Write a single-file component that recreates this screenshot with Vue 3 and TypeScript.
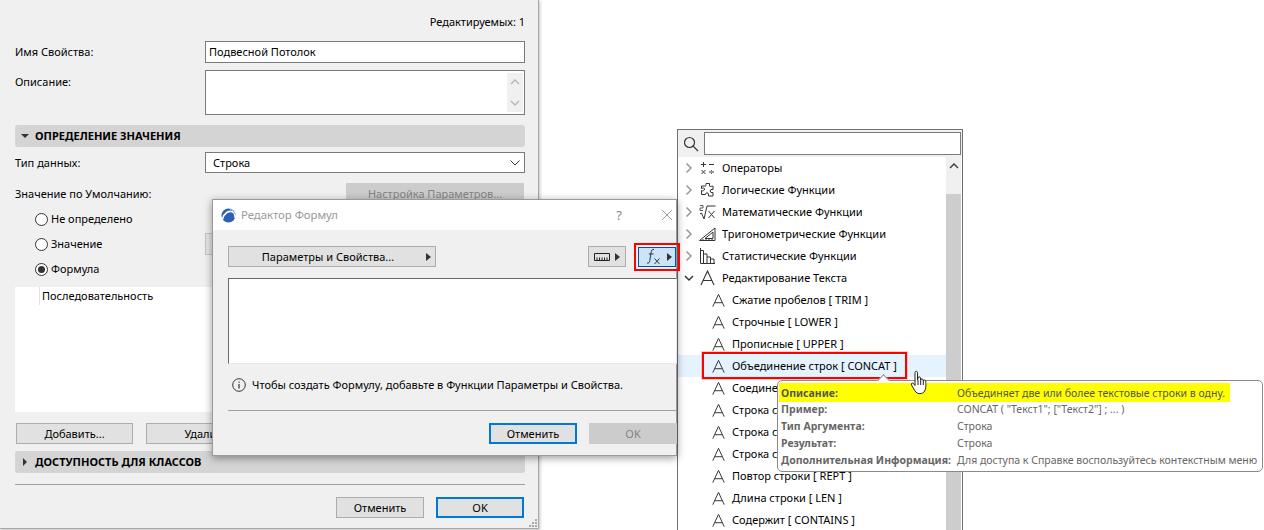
<script setup lang="ts">
interface Cat { label: string; icon: string; open?: boolean }
const cats: Cat[] = [
  { label: 'Операторы', icon: 'ops' },
  { label: 'Логические Функции', icon: 'puzzle' },
  { label: 'Математические Функции', icon: 'sqrt' },
  { label: 'Тригонометрические Функции', icon: 'tri' },
  { label: 'Статистические Функции', icon: 'bars' },
  { label: 'Редактирование Текста', icon: 'a', open: true },
]
const subs = [
  'Сжатие пробелов [ TRIM ]', 'Строчные [ LOWER ]', 'Прописные [ UPPER ]',
  'Объединение строк [ CONCAT ]', 'Соедине', 'Строка с', 'Строка с ',
  'Строка с  ', 'Повтор строки [ REPT ]', 'Длина строки [ LEN ]', 'Содержит [ CONTAINS ]',
]
const tips = [
  ['Описание:', 'Объединяет две или более текстовые строки в одну.'],
  ['Пример:', 'CONCAT ( "Текст1"; ["Текст2"] ; ... )'],
  ['Тип Аргумента:', 'Строка'],
  ['Результат:', 'Строка'],
  ['Дополнительная Информация:', 'Для доступа к Справке воспользуйтесь контекстным меню'],
]
</script>

<template>
  <div class="desk">
    <!-- property panel -->
    <section class="panel">
      <div class="editable">Редактируемых: 1</div>
      <div class="row r-name">
        <label>Имя Свойства:</label>
        <div class="input name">Подвесной Потолок</div>
      </div>
      <div class="row r-desc">
        <label class="top">Описание:</label>
        <div class="input area">
          <div class="mini-scroll">
            <svg width="10" height="6" viewBox="0 0 10 6"><path d="M1 5l4-4 4 4" class="chev-light" /></svg>
            <svg width="10" height="6" viewBox="0 0 10 6"><path d="M1 1l4 4 4-4" class="chev-light" /></svg>
          </div>
        </div>
      </div>
      <div class="section s1"><i class="tri-down"></i>ОПРЕДЕЛЕНИЕ ЗНАЧЕНИЯ</div>
      <div class="row r-type">
        <label>Тип данных:</label>
        <div class="input select">
          <span>Строка</span>
          <svg width="10" height="6" viewBox="0 0 10 6"><path d="M.5.500l4.500 4.500 4.500-4.500" fill="none" stroke="#333" /></svg>
        </div>
      </div>
      <div class="row r-def">
        <label>Значение по Умолчанию:</label>
        <div class="btn disabled params">Настройка Параметров...</div>
      </div>
      <div class="radios">
        <div class="radio"><i class="dot"></i>Не определено</div>
        <div class="radio"><i class="dot"></i>Значение<div class="valbox"></div></div>
        <div class="radio"><i class="dot on"></i>Формула</div>
      </div>
      <div class="list"><div class="cell">Последовательность</div></div>
      <div class="actions">
        <div class="btn add">Добавить...</div>
        <div class="btn del">Удалить</div>
      </div>
      <div class="section s2"><i class="tri-right"></i>ДОСТУПНОСТЬ ДЛЯ КЛАССОВ</div>
      <div class="rule"></div>
      <div class="foot">
        <div class="btn fbtn">Отменить</div>
        <div class="btn fbtn primary">OK</div>
      </div>
      <svg class="grip" width="10" height="10" viewBox="0 0 10 10" fill="#aaa">
        <rect x="7" y="1" width="2" height="2" /><rect x="4" y="4" width="2" height="2" /><rect x="7" y="4" width="2" height="2" />
        <rect x="1" y="7" width="2" height="2" /><rect x="4" y="7" width="2" height="2" /><rect x="7" y="7" width="2" height="2" />
      </svg>
    </section>

    <!-- function popup -->
    <section class="popup">
      <div class="search">
        <svg width="16" height="16" viewBox="0 0 16 16"><circle cx="6.500" cy="6.500" r="5" fill="none" stroke="#333" stroke-width="1.200" /><path d="M10.200 10.200L15 15" stroke="#333" stroke-width="1.200" /></svg>
        <div class="sinput"></div>
      </div>
      <div class="tree">
        <div class="items">
          <div v-for="c in cats" :key="c.label" class="item">
            <svg class="chev" width="10" height="12" viewBox="0 0 10 12">
              <path v-if="c.open" d="M1 4l4 4 4-4" fill="none" stroke="#333" stroke-width="1.500" />
              <path v-else d="M2.500 1.500l4.500 4.500-4.500 4.500" fill="none" stroke="#999" stroke-width="1.500" />
            </svg>
            <svg class="ic" width="17" height="16" viewBox="0 0 17 16" fill="none" stroke="#333">
              <template v-if="c.icon === 'ops'">
                <path d="M2 4.500h5M4.500 2v5M10 4.500h5M2.500 10l4 4M6.500 10l-4 4M10 12h5" />
                <path d="M12.500 10v.8M12.500 13.200v.8" />
              </template>
              <path v-else-if="c.icon === 'puzzle'" d="M7 1.500h3.500v2.500c0 1 3.500 0 3.500 0v3.500h-2c-1 0-1 3 0 3h2v3.500H9.500v-2c0-1.500-3-1.500-3 0v.5H2.500v-4c1.500 1 3 0 3-1.500S4 6 2.500 6.500V4H6.500c1 0 0-2.500.5-2.500z" />
              <template v-else-if="c.icon === 'sqrt'">
                <path d="M1 10l1.500-1L5 15 8 2h8.500M9.500 7l6 7M15.500 7l-6 7" />
                <path d="M1 1.500h3v2.500H1v2.500h3" stroke-width=".8" />
              </template>
              <template v-else-if="c.icon === 'tri'">
                <path d="M.5 14.500L16 2v12.500zM6 12.500l8-6.500v6.500z" />
                <path d="M4 14.500v-1.500M7 14.500v-1.500M10 14.500v-1.500M13 14.500v-1.500" />
              </template>
              <path v-else-if="c.icon === 'bars'" d="M1.500 0v15.500H16M1.500 14V2.500h3V15M4.500 6h3.500v9M8 9h3.500v6M11.500 11H15v4" />
              <path v-else d="M2 15L8.500 1 15 15M4.300 10.500h8.400" stroke-width="1.100" />
            </svg>
            <span>{{ c.label }}</span>
          </div>
          <div v-for="s in subs" :key="s" class="item sub" :class="{ hot: s.includes('CONCAT') }">
            <svg class="ic" width="15" height="15" viewBox="0 0 17 16" fill="none" stroke="#333">
              <path d="M2 15L8.500 1 15 15M4.300 10.500h8.400" stroke-width="1.100" />
            </svg>
            <span>{{ s }}</span>
          </div>
        </div>
        <div class="sbar">
          <div class="sup"><svg width="10" height="6" viewBox="0 0 10 6"><path d="M1 5l4-4 4 4" fill="none" stroke="#444" stroke-width="1.500" /></svg></div>
          <div class="sthumb"></div>
        </div>
      </div>
    </section>

    <!-- formula dialog -->
    <section class="dialog">
      <header class="titlebar">
        <svg class="logo" width="15" height="15" viewBox="0 0 15 15">
          <circle cx="7.500" cy="7.500" r="7" fill="#2f5fb5" />
          <path d="M1.500 11C3 5 8 2 12 4c1.500 1 2 3 2.200 6" fill="none" stroke="#fff" stroke-width="1.600" />
          <path d="M9 1.200A7 7 0 0 1 14 6" fill="none" stroke="#8fb2e6" stroke-width="1" />
        </svg>
        <span class="dtitle">Редактор Формул</span>
        <span class="help">?</span>
        <svg class="close" width="12" height="12" viewBox="0 0 12 12"><path d="M1 1l10 10M11 1L1 11" stroke="#9a9a9a" fill="none" /></svg>
      </header>
      <div class="dbody">
        <div class="tools">
          <div class="btn pp"><span>Параметры и Свойства...</span><i class="tri-right dark"></i></div>
          <div class="btn ruler">
            <svg width="16" height="8" viewBox="0 0 16 8"><path d="M.5.500h15v7H.500zM3 4.500v3M5.500 4.500v3M8 4.500v3M10.500 4.500v3M13 4.500v3" fill="none" stroke="#222" /></svg>
            <i class="tri-right dark"></i>
          </div>
          <div class="fxwrap">
            <div class="fx">
              <svg width="15" height="17" viewBox="0 0 15 17"><path d="M8 1.500C6 1 5.400 2.500 5 5L3.800 12.500c-.3 2-1 3-2.800 2.500M2.800 6h4.700M8.500 10.500l5 5.500M13.500 10.500l-5 5.500" fill="none" stroke="#333" /></svg>
              <i class="tri-right dark"></i>
            </div>
          </div>
        </div>
        <div class="editor"></div>
        <div class="info">
          <svg width="14" height="14" viewBox="0 0 14 14"><circle cx="7" cy="7" r="6.300" fill="none" stroke="#333" /><path d="M7 6v4.500M7 3.500v1.300" stroke="#333" stroke-width="1.200" /></svg>
          <span>Чтобы создать Формулу, добавьте в Функции Параметры и Свойства.</span>
        </div>
        <div class="drule"></div>
        <div class="dfoot">
          <div class="btn dbtn primary">Отменить</div>
          <div class="btn dbtn disabled">OK</div>
        </div>
      </div>
    </section>

    <div class="mark concat"></div>

    <!-- tooltip -->
    <aside class="tip">
      <i class="notch"></i>
      <div class="tipgrid">
        <template v-for="(t, i) in tips" :key="t[0]">
          <div class="tl" :class="{ y: i === 0 }">{{ t[0] }}</div>
          <div class="tv" :class="{ y: i === 0 }">{{ t[1] }}</div>
        </template>
      </div>
    </aside>

    <svg class="hand" width="20" height="26" viewBox="0 0 20 26">
      <path d="M5 2.500c0-1.500 2.500-1.500 2.500 0V10l.5-2c0-1.500 2.500-1.500 2.500 0l.2 2c0-1.500 2.300-1.500 2.400 0l.2 1c.2-1.300 2.200-1.300 2.400.2.400 3 .3 6-.5 8.500-.5 2-1.800 3.300-4 3.800-3 .5-5-.5-6.500-3L1.500 15c-.8-1.500 1-2.700 2-1.500L5 15.500z" fill="#fff" stroke="#222" />
      <path d="M8 10v5M10.700 10v5M13.300 11v4" stroke="#222" fill="none" />
    </svg>
  </div>
</template>

<style>
html, body { margin: 0; background: #fff; }
</style>

<style scoped>
.desk {
  position: relative;
  width: 1264px;
  height: 530px;
  overflow: hidden;
  background: #fff;
  color: #000;
  font: 11px/16px "Noto Sans", "Open Sans", sans-serif;
}
.panel {
  position: absolute;
  left: 0;
  top: 0;
  width: 539px;
  height: 529px;
  box-sizing: border-box;
  padding: 14px 13px 0 15px;
  background: #f0f0f0;
  border-right: 1px solid #a8a8a8;
  border-bottom: 1px solid #a8a8a8;
  box-shadow: 1px 1px 3px rgba(0, 0, 0, .25);
}
.editable { text-align: right; height: 16px; }
.row { display: flex; align-items: center; justify-content: space-between; }
.row label { display: block; }
.row label.top { align-self: flex-start; margin-top: 4px; }
.input {
  box-sizing: border-box;
  width: 320px;
  background: #fff;
  border: 1px solid #7a7a7a;
}
.r-name { margin-top: 11px; }
.name { height: 22px; padding: 2px 3px; line-height: 16px; }
.r-desc { margin-top: 7px; }
.area { height: 45px; position: relative; display: flex; justify-content: flex-end; padding: 2px 1px; }
.mini-scroll {
  width: 16px;
  background: #f0f0f0;
  display: flex;
  flex-direction: column;
  align-items: center;
  justify-content: space-between;
  padding: 6px 0;
  box-sizing: border-box;
}
.chev-light { fill: none; stroke: #b5b5b5; stroke-width: 1.300; }
.section {
  display: flex;
  align-items: center;
  height: 22px;
  background: #d4d4d4;
  border-radius: 3px;
  font-weight: 700;
}
.s1 { margin-top: 10px; }
.tri-down {
  width: 0; height: 0; margin: 0 6px 0 6px;
  border-left: 4px solid transparent; border-right: 4px solid transparent;
  border-top: 4px solid #333;
}
.tri-right {
  width: 0; height: 0; margin: 0 8px 0 8px;
  border-top: 4px solid transparent; border-bottom: 4px solid transparent;
  border-left: 4px solid #333;
}
.tri-right.dark { margin: 0; border-top-width: 4px; border-bottom-width: 4px; border-left-width: 5px; border-left-color: #333; }
.r-type { margin-top: 5px; }
.select {
  height: 21px;
  display: flex; align-items: center; justify-content: space-between;
  padding: 0 4px 0 7px;
}
.r-def { margin-top: 10px; height: 21px; }
.btn {
  box-sizing: border-box;
  display: flex; align-items: center; justify-content: center;
  background: #e1e1e1;
  border: 1px solid #adadad;
  flex: none;
}
.btn.disabled { background: #ccc; color: #838383; border-color: #ccc; }
.params { width: 178px; height: 21px; margin-right: 1px; }
.radios { margin: 7px 0 0 20px; display: flex; flex-direction: column; gap: 9px; }
.radio { display: flex; align-items: center; height: 16px; gap: 3px; }
.valbox {
  box-sizing: border-box;
  flex: none;
  width: 120px;
  height: 22px;
  margin-left: 100px;
  background: #e6e6e6;
  border: 1px solid #c4c4c4;
}
.dot {
  box-sizing: border-box;
  width: 13px; height: 13px;
  border: 1px solid #333;
  border-radius: 50%;
  background: #fff;
  position: relative;
}
.dot.on::after {
  content: "";
  position: absolute;
  inset: 2px;
  border-radius: 50%;
  background: #333;
}
.list { margin-top: 10px; height: 125px; background: #fff; padding-left: 24px; }
.cell { height: 18px; border-left: 1px solid #e2e2e2; padding-left: 2px; line-height: 18px; }
.actions { display: flex; gap: 13px; margin: 11px 0 0 1px; }
.add, .del { height: 21px; width: 117px; }
.del { width: 120px; }
.s2 { margin-top: 7px; }
.rule { height: 1px; margin-top: 11px; background: #a0a0a0; }
.foot { display: flex; justify-content: flex-end; gap: 12px; margin: 12px 1px 0 0; }
.fbtn { width: 88px; height: 21px; }
.primary { border: 2px solid #0078d7; }
.grip { position: absolute; right: 0; bottom: 0; }

.dialog {
  position: absolute;
  left: 212px;
  top: 199px;
  width: 465px;
  height: 257px;
  background: #f0f0f0;
  border: 1px solid #9a9a9a;
  box-sizing: border-box;
  box-shadow: 0 2px 8px rgba(0, 0, 0, .4);
}
.titlebar {
  height: 30px;
  background: #fff;
  display: flex;
  align-items: center;
  padding: 0 2px 0 8px;
}
.logo { margin-right: 5px; }
.dtitle { color: #999; font-size: 11.300px; }
.help { margin-left: auto; margin-right: 39px; color: #888; font-size: 13px; }
.close { margin-right: 1px; }
.dbody { padding: 16px 0 0 15px; }
.tools { display: flex; align-items: center; height: 21px; }
.pp { width: 208px; height: 21px; position: relative; padding-right: 8px; }
.pp .tri-right { position: absolute; right: 4px; top: 5.500px; }
.ruler { width: 38px; height: 21px; margin-left: 152px; gap: 5px; }
.fxwrap {
  margin-left: 8px;
  box-sizing: border-box;
  width: 46px;
  height: 28px;
  border: 2px solid #f00;
  padding: 2px;
  flex: none;
}
.fx {
  box-sizing: border-box;
  height: 100%;
  background: #cce4f7;
  border: 1px solid #005499;
  display: flex; align-items: center; justify-content: flex-end;
  gap: 6px;
  padding-right: 3px;
}
.editor {
  box-sizing: border-box;
  width: 449px;
  height: 86px;
  margin-top: 11px;
  background: #fff;
  border: 1px solid #e8e8e8;
  border-top: 1px solid #696969;
  border-left: 1px solid #696969;
}
.info { display: flex; align-items: center; gap: 6px; margin: 13px 0 0 4px; height: 16px; }
.drule { width: 449px; height: 1px; margin-top: 17px; background: #a0a0a0; }
.dfoot { display: flex; justify-content: flex-end; gap: 12px; width: 449px; margin-top: 12px; }
.dbtn { width: 88px; height: 21px; }

.popup {
  position: absolute;
  left: 677px;
  top: 129px;
  width: 286px;
  height: 420px;
  box-sizing: border-box;
  border: 1px solid #6f6f6f;
  background: #fff;
}
.search {
  height: 27px;
  background: #f0f0f0;
  display: flex;
  align-items: center;
  padding: 0 1px 0 5px;
  gap: 5px;
}
.sinput { flex: 1; height: 23px; box-sizing: border-box; background: #fff; border: 1px solid #7a7a7a; }
.tree { display: flex; height: 392px; }
.items { flex: 1; min-width: 0; }
.item { height: 22px; display: flex; align-items: center; color: #000; }
.chev { margin: 0 5px 0 6px; flex: none; }
.ic { margin-right: 6px; flex: none; }
.sub { padding-left: 33px; }
.sub .ic { margin-right: 6px; }
.hot { background: #e5f3ff; }
.sbar { width: 15px; margin-right: 1px; background: #f0f0f0; flex: none; }
.sup { height: 37px; display: flex; justify-content: center; padding-top: 6px; box-sizing: border-box; }
.sthumb { height: 355px; background: #cdcdcd; }

.mark { position: absolute; box-sizing: border-box; border: 2px solid #f00; pointer-events: none; }
.concat { left: 702px; top: 352px; width: 205px; height: 27px; box-shadow: 0 0 0 1px rgba(255, 0, 0, .2); }

.tip {
  position: absolute;
  left: 777px;
  top: 380px;
  width: 486px;
  height: 92px;
  box-sizing: border-box;
  background: #fff;
  border: 1px solid #8a8a8a;
  border-radius: 5px;
  padding: 2px 0 0 1px;
  color: #666;
  font-size: 10.500px;
}
.notch {
  position: absolute;
  left: 101px;
  top: -5px;
  width: 8px;
  height: 8px;
  background: #fff;
  border-left: 1px solid #8a8a8a;
  border-top: 1px solid #8a8a8a;
  transform: rotate(45deg);
}
.tipgrid {
  position: relative;
  display: grid;
  grid-template-columns: 178px 1fr;
  grid-template-rows: 18px repeat(4, 17px);
  line-height: 17px;
}
.tl { font-weight: 700; padding-left: 2px; color: #666; white-space: nowrap; }
.tv { white-space: nowrap; }
.tl.y { background: #ff0; height: 19px; line-height: 20px; color: #555; }
.tv.y { background: #ff0; height: 19px; line-height: 20px; width: 273px; color: #555; }
.hand { position: absolute; left: 910px; top: 370px; }
</style>
